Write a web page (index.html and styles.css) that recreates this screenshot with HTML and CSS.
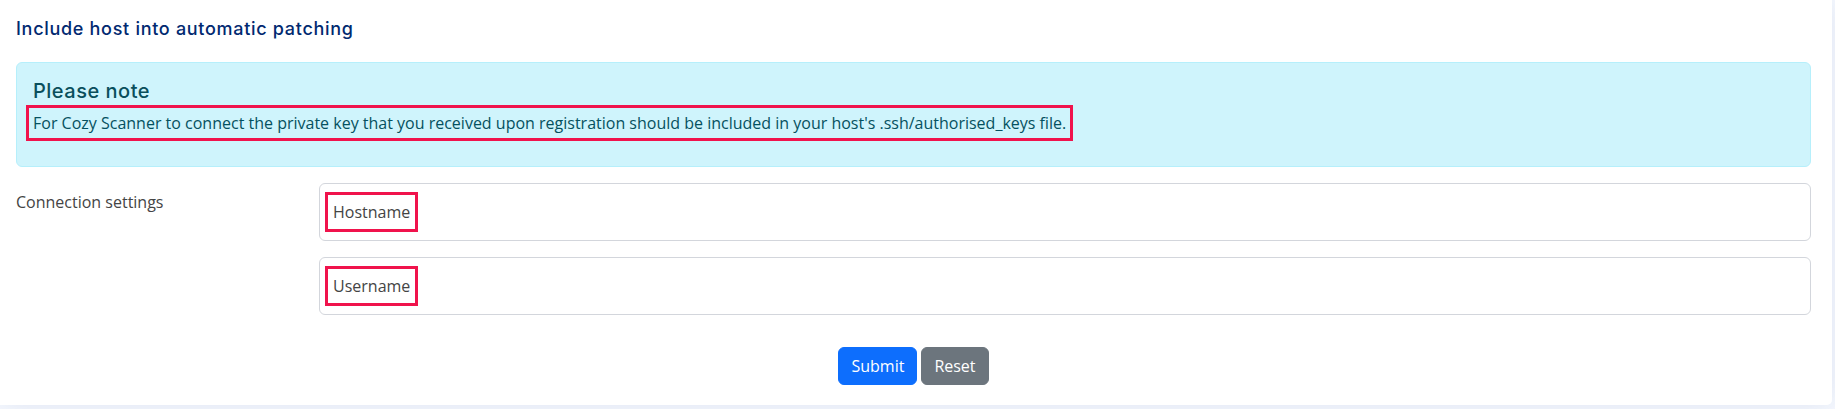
FILE: index.html
```html
<!DOCTYPE html>
<html lang="en">
<head>
<meta charset="utf-8">
<title>Include host into automatic patching</title>
<link rel="stylesheet" href="styles.css">
</head>
<body>
<div class="card">
  <h5 class="card-title">Include host into automatic patching</h5>
  <div class="alert">
    <h4 class="alert-heading">Please note</h4>
    <p class="alert-text"><span class="mark">For Cozy Scanner to connect the private key that you received upon registration should be included in your host's .ssh/authorised_keys file.</span></p>
  </div>
  <div class="form-row">
    <label class="form-label">Connection settings</label>
    <div class="fields">
      <div class="field"><span class="mark mark-field">Hostname</span></div>
      <div class="field"><span class="mark mark-field">Username</span></div>
    </div>
  </div>
  <div class="actions">
    <button class="btn btn-primary" type="button">Submit</button>
    <button class="btn btn-secondary" type="button">Reset</button>
  </div>
</div>
</body>
</html>
```

FILE: styles.css
```css
* { box-sizing: border-box; }

html, body {
  margin: 0;
  padding: 0;
}

body {
  background: #f6f9ff;
  font-family: "Open Sans", "Noto Sans", sans-serif;
  font-size: 16px;
  line-height: 1.5;
  color: #444444;
  height: 409px;
  overflow: hidden;
}

.card {
  width: 1832px;
  background: #ffffff;
  border-radius: 0 0 5px 0;
  box-shadow: 0 0 30px rgba(1, 41, 112, 0.1);
  padding: 18px 21px 20px 16px;
}

.card-title {
  margin: 0 0 22px 0;
  font-family: Inter, "Noto Sans", sans-serif;
  font-weight: 500;
  font-size: 18px;
  letter-spacing: 0.7px;
  line-height: 22px;
  color: #012970;
}

.alert {
  background: #cff4fc;
  border: 1px solid #b6effb;
  border-radius: 6px;
  padding: 16px;
  margin-bottom: 16px;
  color: #055160;
}

.alert-heading {
  margin: 0 0 8px 0;
  font-family: Inter, "Noto Sans", sans-serif;
  font-weight: 500;
  font-size: 20px;
  letter-spacing: 0.5px;
  line-height: 24px;
  color: #0a4f5c;
}

.alert-text {
  margin: 0 0 15px 0;
}

.mark {
  outline: 3px solid #f0134c;
  outline-offset: 4px;
}

.mark-field {
  outline-offset: 5px;
}

.form-row {
  display: grid;
  grid-template-columns: 279px 1fr;
  column-gap: 24px;
}

.form-label {
  padding-top: 7px;
  color: #444444;
}

.fields {
  display: flex;
  flex-direction: column;
  gap: 16px;
}

.field {
  height: 58px;
  border: 1px solid #d3d6dc;
  border-radius: 6px;
  padding: 0 13px;
  display: flex;
  align-items: center;
  color: #444444;
}

.actions {
  display: flex;
  justify-content: center;
  gap: 4px;
  margin-top: 32px;
}

.btn {
  font-family: "Open Sans", "Noto Sans", sans-serif;
  font-size: 16px;
  line-height: 24px;
  padding: 6px 12px;
  border: 1px solid transparent;
  border-radius: 6px;
  color: #ffffff;
  cursor: pointer;
}

.btn-primary {
  background: #0d6efd;
  border-color: #0d6efd;
}

.btn-secondary {
  background: #6c757d;
  border-color: #6c757d;
}
```
